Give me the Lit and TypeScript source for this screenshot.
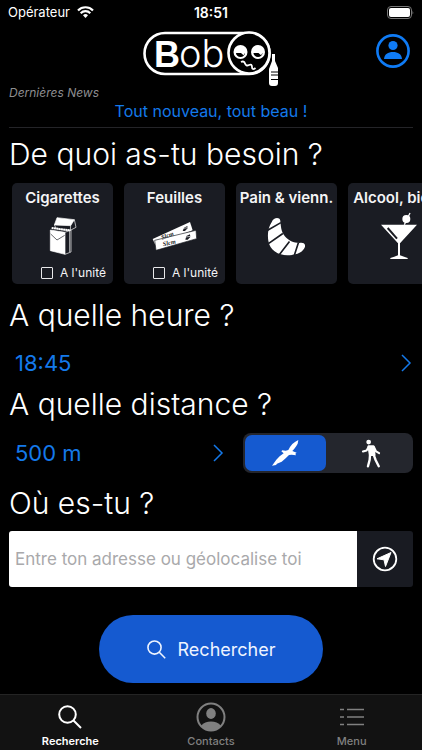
import { LitElement, html, css, svg, nothing } from "lit";
import { customElement, property, state } from "lit/decorators.js";
import { classMap } from "lit/directives/class-map.js";

const packIcon = html`<svg width="28" height="40" viewBox="0 0 84 120" fill="none" stroke-linejoin="round" aria-hidden="true">
  <path d="M24 5 76 11 65 29 16 27Z" fill="#fff" stroke="#fff" stroke-width="2" />
  <path d="M16 27 22 38 62 44 81 34 76 11M65 29 64 43" stroke="#fff" stroke-width="2" />
  <path d="M8 36 62 43" stroke="#fff" stroke-width="6" stroke-dasharray="6 1" />
  <path d="M4 42 48 49V115L4 104Z" fill="#fff" stroke="#fff" stroke-width="2" />
  <path d="M48 49 66 42V108L48 115M62 44V108" stroke="#fff" stroke-width="2" />
  <path d="M5 54 24 72 47 58" stroke="#1a1c23" stroke-width="2" />
</svg>`;

const papersIcon = html`<svg width="46" height="30" viewBox="0 0 138 90" aria-hidden="true">
  <path d="M2 54 114 3 122 28 10 72Z" fill="#fff" />
  <path d="M8 58 132 28 134 53 12 88Z" fill="#fff" stroke="#1a1c23" stroke-width="2" />
  <g class="paper-mark" fill="#1a1c23">
    <text x="30" y="56" transform="rotate(-20 30 56)">Slcm</text>
    <text x="34" y="76" transform="rotate(-13 34 76)">Slcm</text>
  </g>
  <path d="M92 30 96 20 106 15 107 22 99 30ZM100 56 103 45 114 40 115 48 107 56Z" fill="#1a1c23" />
  <path d="M94 22 107 20M102 48 116 46" stroke="#fff" stroke-width="2" />
</svg>`;

const croissantIcon = html`<svg width="39" height="41" viewBox="0 0 118 122" aria-hidden="true">
  <path d="M14 18C20 2 38 2 40 12C42 28 42 46 54 60C66 74 84 82 104 80C116 80 118 90 112 98C104 112 84 117 62 118C34 118 8 102 4 74C1 52 4 34 14 18Z" fill="#fff" />
  <path d="M2 42 42 19M2 84 48 52M36 118 68 76M82 120 95 80" stroke="#1a1c23" stroke-width="5" />
</svg>`;

const cocktailIcon = html`<svg width="36" height="48" viewBox="0 0 108 144" aria-hidden="true">
  <path d="M0 38H108L57 94V130Q70 135 80 138V141H28V138Q40 135 51 130V94Z" fill="#fff" />
  <circle cx="76" cy="21" r="12" fill="#fff" />
  <path d="M87 3 70 38" stroke="#fff" stroke-width="4" />
  <path d="M20 48 48 80" stroke="#1a1c23" stroke-width="6" />
</svg>`;

const chevron = html`<svg width="12" height="18" viewBox="0 0 12 18" fill="none" stroke="currentColor" stroke-width="1.5" aria-hidden="true">
  <path d="M2 1 10 9 2 17" />
</svg>`;

const searchGlyph = (size: number, width: number) => html`<svg width=${size} height=${size} viewBox="0 0 24 24" fill="none" stroke="currentColor" stroke-width=${width} aria-hidden="true">
  <circle cx="9.5" cy="9.5" r="8.3" />
  <path d="M15.5 15.5 23 23" />
</svg>`;

const person = html`<svg width="34" height="34" viewBox="0 0 34 34" fill="currentColor" aria-hidden="true">
  <circle cx="17" cy="17" r="15.6" fill="none" stroke="currentColor" stroke-width="2.6" />
  <circle cx="17" cy="11.5" r="4.6" />
  <path d="M8 25C8.500 20 12 18 17 18S25.500 20 26 25Z" />
</svg>`;

const contactGlyph = html`<svg width="30" height="30" viewBox="0 0 30 30" fill="currentColor" aria-hidden="true">
  <circle cx="15" cy="15" r="13.500" fill="none" stroke="currentColor" stroke-width="2" />
  <ellipse cx="15" cy="11.500" rx="4.800" ry="5.400" />
  <path d="M5 24C7.500 20.500 11 19.500 15 19.500S22.500 20.500 25 24A13.500 13.500 0 0 1 5 24Z" />
</svg>`;

const listGlyph = html`<svg width="24" height="18" viewBox="0 0 24 18" stroke="currentColor" stroke-width="1.600" aria-hidden="true">
  <path d="M0 1.500H4M7 1.500H24M0 9H4M7 9H24M0 16.500H4M7 16.500H24" />
</svg>`;

const eye = (x: number) => svg`<g transform="translate(${x} 21)">
  <circle r="7" fill="#fff" />
  <path d="M-4.500 1H4.500A4.500 4 0 0 1-4.500 1Z" fill="#000" />
  <path d="M0.500 1H4.500L3 3.200Z" fill="#fff" />
</g>`;

const logo = html`<svg class="logo" width="136" height="56" viewBox="0 0 136 56" role="img" aria-label="Bob">
  <rect x="1.500" y="2" width="125" height="41" rx="20.500" fill="none" stroke="#fff" stroke-width="2.600" />
  <text class="logo-bold" x="11" y="36" fill="#fff">B</text>
  <text class="logo-light" x="36" y="36" fill="#fff">ob</text>
  <circle cx="106" cy="22" r="20.500" fill="#000" stroke="#fff" stroke-width="2.600" />
  ${eye(97.500)}${eye(115)}
  <path d="M98 31Q101 29.500 102 32.500T106 34T109 36T112.500 37" fill="none" stroke="#fff" stroke-width="1.800" />
  <path d="M129 23H132V30L135 37V52Q135 55 132 55H129Q126 55 126 52V38L129 30Z" fill="#fff" />
  <path d="M128 41H135M128 44H135M128 48.500H135" stroke="#000" stroke-width="1" />
</svg>`;

const birdIcon = html`<svg width="28" height="28" viewBox="0 0 84 84" fill="#fff" aria-hidden="true">
  <path d="M82 3 80 14 76 21 70 29 64 36 77 41 73 44 75 49 62 47 54 48 44 58 32 68 18 74 15 78 3 80 9 72 16 62 26 52 38 43 31 37 34 34 44 35 52 33 57 24 64 15 73 8Z" />
</svg>`;

const walkIcon = html`<svg width="20" height="29" viewBox="0 0 58 86" fill="none" stroke="#fff" stroke-width="7" stroke-linecap="round" stroke-linejoin="round" aria-hidden="true">
  <circle cx="22" cy="9" r="7" fill="#fff" stroke="none" />
  <path d="M22 22 36 22 39 47 26 47Z" fill="#fff" />
  <path d="M22 23 16 34 5 37M38 24 44 37 53 42" stroke-width="6" />
  <path d="M26 48 25 62 20 81M37 47 43 63 52 81" />
</svg>`;

const locateIcon = html`<svg width="26" height="26" viewBox="0 0 26 26" aria-hidden="true">
  <circle cx="13" cy="13" r="11.300" fill="none" stroke="#fff" stroke-width="1.800" />
  <path d="M19 6.500 13.500 20.500 12 13.800 5 12.800Z" fill="#fff" stroke="#fff" stroke-linejoin="round" />
</svg>`;

@customElement("product-card")
export class ProductCard extends LitElement {
  @property() name = "";
  @property({ attribute: false }) icon: unknown = nothing;
  @property({ type: Boolean }) single = false;

  static styles = css`
    :host {
      display: flex;
      flex-direction: column;
      flex: 0 0 101px;
      height: 101px;
      border-radius: 5px;
      background: #1a1c23;
      overflow: hidden;
    }
    .pick {
      display: flex;
      flex-direction: column;
      align-items: center;
      border: 0;
      padding: 5px 0 0;
      background: none;
      color: #f4f4f6;
      font: 600 15px/20px Inter, sans-serif;
      white-space: nowrap;
    }
    .art {
      display: flex;
      align-items: center;
      justify-content: center;
      height: 56px;
    }
    .paper-mark {
      font: italic 700 19px "Liberation Serif", serif;
    }
    .unit {
      display: flex;
      align-items: center;
      justify-content: flex-end;
      gap: 7px;
      padding: 1px 7px 0 0;
      color: #f4f4f6;
      font: 12px/16px Inter, sans-serif;
    }
    .box {
      appearance: none;
      width: 12px;
      height: 12px;
      margin: 0;
      border: 1px solid #e8e8ea;
      border-radius: 1px;
    }
    .box:checked {
      background: #155ad0;
    }
  `;

  render() {
    return html`
      <button class="pick" type="button">
        <span>${this.name}</span>
        <span class="art">${this.icon}</span>
      </button>
      ${this.single
        ? html`<label class="unit"><input class="box" type="checkbox" />A l'unité</label>`
        : nothing}
    `;
  }
}

@customElement("app-root")
export class AppRoot extends LitElement {
  @state() private mode = "bird";

  private products = [
    { name: "Cigarettes", icon: packIcon, single: true },
    { name: "Feuilles", icon: papersIcon, single: true },
    { name: "Pain & vienn.", icon: croissantIcon, single: false },
    { name: "Alcool, bière", icon: cocktailIcon, single: false },
  ];

  private tabs = [
    { label: "Recherche", icon: searchGlyph(24, 2), active: true },
    { label: "Contacts", icon: contactGlyph, active: false },
    { label: "Menu", icon: listGlyph, active: false },
  ];

  static styles = css`
    :host {
      display: flex;
      flex-direction: column;
      min-height: 100vh;
      background: #000;
      color: #fff;
      font-family: Inter, sans-serif;
    }
    * {
      box-sizing: border-box;
    }
    svg {
      display: block;
    }
    button,
    input {
      font-family: inherit;
    }
    .status {
      display: grid;
      grid-template-columns: 1fr auto 1fr;
      align-items: center;
      height: 24px;
      padding: 0 8px;
      font-size: 13px;
    }
    .carrier {
      display: flex;
      align-items: center;
      gap: 7px;
    }
    .clock {
      font-size: 14px;
      font-weight: 600;
    }
    .battery {
      justify-self: end;
    }
    .top {
      display: grid;
      grid-template-columns: 1fr auto 1fr;
      padding: 7px 12px 0;
    }
    .logo {
      grid-column: 2;
    }
    .logo-bold {
      font: 700 36px "Liberation Sans", sans-serif;
    }
    .logo-light {
      font: 300 38px Inter, sans-serif;
    }
    .profile {
      justify-self: end;
      align-self: start;
      margin-top: 3px;
      border: 0;
      padding: 0;
      background: none;
      color: #0f7bf5;
    }
    main {
      flex: 1;
      padding: 0 9px;
    }
    .news {
      display: flex;
      flex-direction: column;
      border-bottom: 1px solid #242428;
      padding-bottom: 4px;
    }
    .news-title {
      margin: 0;
      color: #8e8e90;
      font: italic 400 12px/12px Inter, sans-serif;
    }
    .news-link {
      align-self: center;
      color: #1479ea;
      font-size: 16px;
      line-height: 24px;
      text-decoration: none;
    }
    h2 {
      margin: 0;
      font-size: 30px;
      font-weight: 300;
      line-height: 40px;
    }
    .need {
      padding: 6px 0 9px;
    }
    .cards {
      display: flex;
      gap: 11px;
      margin-right: -9px;
      padding-left: 3px;
      overflow-x: auto;
      scrollbar-width: none;
    }
    .hour {
      padding-top: 11px;
    }
    .where {
      padding: 10px 0 8px;
    }
    .row {
      display: flex;
      align-items: center;
      gap: 18px;
      margin-top: 9px;
    }
    .choice {
      display: flex;
      align-items: center;
      justify-content: space-between;
      border: 0;
      padding: 0 1px 0 6px;
      background: none;
      color: #1479ea;
      font-size: 22px;
      font-weight: 400;
    }
    .distance {
      flex: 1;
      height: 40px;
    }
    .time {
      width: 100%;
      height: 49px;
      padding-top: 6px;
    }
    .segments {
      flex: 0 0 42%;
      display: grid;
      grid-template-columns: 1fr 1fr;
      gap: 5px;
      height: 40px;
      padding: 2px;
      border-radius: 8px;
      background: #24262d;
    }
    .segment {
      display: flex;
      align-items: center;
      justify-content: center;
      border: 0;
      border-radius: 7px;
      background: none;
    }
    .chosen {
      background: #155ad0;
    }
    .address {
      display: flex;
      height: 56px;
      border-radius: 3px;
      background: #191b22;
      overflow: hidden;
    }
    .field {
      flex: 1;
      min-width: 0;
      border: 0;
      border-radius: 0;
      padding: 0 6px;
      background: #fff;
      color: #111;
      font-size: 17px;
    }
    .field::placeholder {
      color: #a9a9ab;
    }
    .locate {
      display: flex;
      align-items: center;
      justify-content: center;
      width: 56px;
      border: 0;
      background: none;
    }
    .search {
      display: flex;
      align-items: center;
      justify-content: center;
      gap: 12px;
      width: 224px;
      height: 68px;
      margin: 28px auto 11px;
      border: 0;
      border-radius: 34px;
      background: #155ad0;
      color: #eef4ff;
      font-size: 18px;
    }
    .tabs {
      display: grid;
      grid-template-columns: repeat(3, 1fr);
      border-top: 1px solid #242424;
      background: #121212;
    }
    .tab {
      display: flex;
      flex-direction: column;
      align-items: center;
      padding: 5px 0 1px;
      color: #808080;
      font-size: 11px;
      font-weight: 500;
      line-height: 16px;
      text-decoration: none;
    }
    .tab-icon {
      display: flex;
      align-items: center;
      height: 33px;
    }
    .current {
      color: #fff;
      font-weight: 600;
    }
  `;

  private segment(id: string, label: string, icon: unknown) {
    const chosen = this.mode === id;
    return html`<button
      type="button"
      class=${classMap({ segment: true, chosen })}
      aria-label=${label}
      aria-pressed=${chosen}
      @click=${() => (this.mode = id)}
    >${icon}</button>`;
  }

  render() {
    return html`
      <div class="status">
        <span class="carrier">
          Opérateur
          <svg width="17" height="12" viewBox="0 0 17 12" fill="none" stroke="#fff" stroke-width="2.200" aria-hidden="true">
            <path d="M1 4.400A10.500 10.500 0 0 1 16 4.400M3.700 7.200A6.800 6.800 0 0 1 13.300 7.200" />
            <path d="M8.500 12 6 9.300A3.500 3.500 0 0 1 11 9.300Z" fill="#fff" stroke="none" />
          </svg>
        </span>
        <span class="clock">18:51</span>
        <svg class="battery" width="27" height="13" viewBox="0 0 27 13" aria-hidden="true">
          <rect x="0.500" y="0.500" width="24" height="12" rx="3.500" fill="none" stroke="#777" />
          <rect x="2" y="2" width="21" height="9" rx="2" fill="#fff" />
          <path d="M25.500 4.500Q27 6.500 25.500 8.500Z" fill="#777" />
        </svg>
      </div>
      <header class="top">
        ${logo}
        <button class="profile" type="button" aria-label="Profil">${person}</button>
      </header>
      <main>
        <section class="news">
          <p class="news-title">Dernières News</p>
          <a class="news-link" href="#news">Tout nouveau, tout beau !</a>
        </section>
        <h2 class="need">De quoi as-tu besoin ?</h2>
        <div class="cards">
          ${this.products.map(
            (p) => html`<product-card .name=${p.name} .icon=${p.icon} .single=${p.single}></product-card>`
          )}
        </div>
        <h2 class="hour">A quelle heure ?</h2>
        <button class="choice time" type="button">18:45 ${chevron}</button>
        <h2>A quelle distance ?</h2>
        <div class="row">
          <button class="choice distance" type="button">500 m ${chevron}</button>
          <div class="segments" role="group" aria-label="Mode de distance">
            ${this.segment("bird", "A vol d'oiseau", birdIcon)}
            ${this.segment("walk", "A pied", walkIcon)}
          </div>
        </div>
        <h2 class="where">Où es-tu ?</h2>
        <div class="address">
          <input class="field" type="text" aria-label="Adresse" placeholder="Entre ton adresse ou géolocalise toi" />
          <button class="locate" type="button" aria-label="Géolocaliser">${locateIcon}</button>
        </div>
        <button class="search" type="button">${searchGlyph(19, 2)} Rechercher</button>
      </main>
      <nav class="tabs">
        ${this.tabs.map(
          (t) => html`<a class=${classMap({ tab: true, current: t.active })} href="#${t.label}">
            <span class="tab-icon">${t.icon}</span>${t.label}
          </a>`
        )}
      </nav>
    `;
  }
}
